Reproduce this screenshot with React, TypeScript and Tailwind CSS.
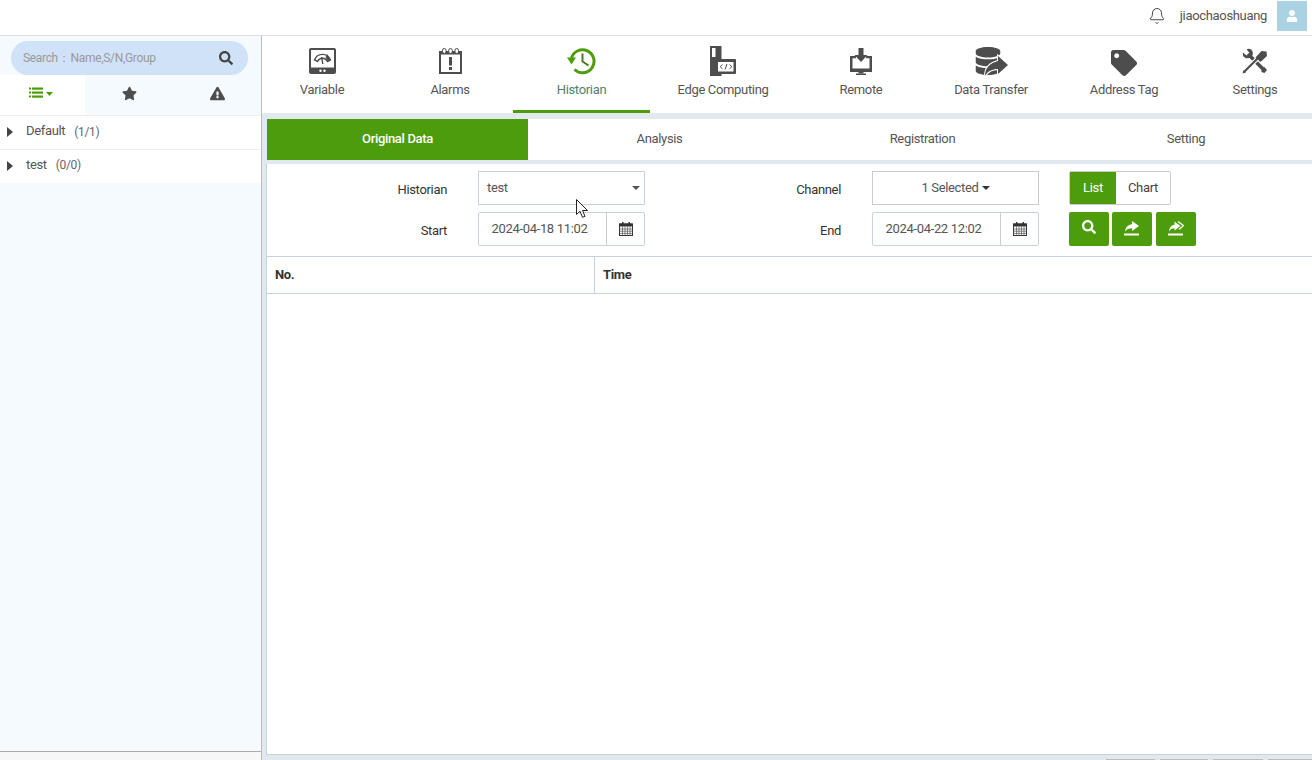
import { FaSearch, FaStar, FaExclamationTriangle, FaTag, FaUser, FaDatabase } from "react-icons/fa";
import { Bell } from "lucide-react";

const font = "font-['Roboto','Liberation_Sans',sans-serif] tracking-[-0.33px]";

const VariableIcon = () => (
  <svg width="27" height="26" viewBox="0 0 27 26">
    <rect x="0" y="0" width="27" height="26" rx="2" fill="#4d4d4d" />
    <rect x="2" y="2" width="23" height="17.500" fill="#fff" />
    <path d="M5.500 12a8.500 8.500 0 0 1 16 0l-3 1.500a5.500 5.500 0 0 0-10 0z" fill="#fff" stroke="#4d4d4d" strokeWidth="1.400" />
    <path d="M18 6l3.500 6-3 1.500a6 6 0 0 0-2-4z" fill="#4d4d4d" />
    <path d="M13.800 16l-1.200-7" stroke="#4d4d4d" strokeWidth="1.400" />
    <circle cx="11.500" cy="22.800" r="1.200" fill="#fff" />
    <circle cx="15.500" cy="22.800" r="1.200" fill="#fff" />
  </svg>
);

const AlarmIcon = () => (
  <svg width="23" height="26" viewBox="0 0 23 26">
    <rect x="1" y="4" width="21" height="21" fill="#fff" stroke="#4d4d4d" strokeWidth="2" />
    <rect x="0" y="4" width="23" height="2.500" fill="#4d4d4d" />
    <rect x="3.500" y="0.500" width="3.500" height="5" rx="1.700" fill="#fff" stroke="#4d4d4d" />
    <rect x="9.750" y="0.500" width="3.500" height="5" rx="1.700" fill="#fff" stroke="#4d4d4d" />
    <rect x="16" y="0.500" width="3.500" height="5" rx="1.700" fill="#fff" stroke="#4d4d4d" />
    <rect x="10" y="9" width="3" height="8.500" fill="#4d4d4d" />
    <rect x="10" y="19" width="3" height="3" fill="#4d4d4d" />
  </svg>
);

const HistoryIcon = () => (
  <svg width="30" height="28" viewBox="0 0 30 28">
    <path d="M4.500 11A11.500 11.500 0 1 1 7.500 22.500" fill="none" stroke="#4c9c0b" strokeWidth="3" />
    <path d="M0 10.500h9l-4.500 7z" fill="#4c9c0b" />
    <path d="M15.500 6.500v8l6 4" fill="none" stroke="#4c7a1f" strokeWidth="2" />
  </svg>
);

const EdgeIcon = () => (
  <svg width="26" height="30" viewBox="0 0 26 30">
    <rect x="0" y="0" width="11.500" height="30" fill="#4d4d4d" />
    <rect x="2" y="2" width="3.500" height="9" fill="#fff" />
    <rect x="7" y="13" width="19" height="15" rx="1" fill="#4d4d4d" />
    <rect x="8" y="16" width="15.500" height="9.500" fill="#fff" />
    <path d="M12.500 18.500l-2.300 2.200 2.300 2.200M19.500 18.500l2.300 2.200-2.300 2.200M17 18l-2 5.500" fill="none" stroke="#4d4d4d" strokeWidth="1" />
  </svg>
);

const RemoteIcon = () => (
  <svg width="22" height="27" viewBox="0 0 22 27">
    <path d="M0 8h6v2.200H2.500v10.300h17V10.200H16V8h6v16H0z" fill="#4d4d4d" />
    <path d="M8.500 0h5v7h4L11 14 4.500 7h4z" fill="#4d4d4d" />
    <rect x="8.500" y="24" width="5" height="1.500" fill="#4d4d4d" />
    <rect x="6" y="25.500" width="10" height="1.500" fill="#4d4d4d" />
  </svg>
);

const TransferIcon = () => (
  <div className="relative w-[34px] h-[29px]">
    <FaDatabase className="absolute left-0 top-0 text-[#4d4d4d]" size={28} />
    <svg className="absolute left-0 top-0" width="34" height="29" viewBox="0 0 34 29">
      <path d="M24 9l10 9-10 9v-5c-6 0-10 2-13 7 0-8 5-13 13-15z" fill="#4d4d4d" stroke="#fff" strokeWidth="2" paintOrder="stroke" />
    </svg>
  </div>
);

const SettingsIcon = () => (
  <svg width="26" height="26" viewBox="0 0 26 26">
    <path d="M6 6l15 15" stroke="#4d4d4d" strokeWidth="3.500" />
    <path d="M19.500 21.500l3-2.500 2.500 3-2.500 3-3-1z" fill="#4d4d4d" />
    <path d="M1 4.500L4.500 7.500 7.500 5 4.500 1.200C7.500-0.300 10.500 1.500 10.800 4.500 11 6.500 10.300 8 9 9.200 6.500 11 3 10.500 1.500 8.500 .8 7.300 .7 6 1 4.500z" fill="#4d4d4d" />
    <path d="M3 23L16 10" stroke="#fff" strokeWidth="4.500" />
    <path d="M2.500 23.500L15.500 10.500" stroke="#4d4d4d" strokeWidth="2.200" />
    <path d="M13.500 9.500l6-6.500 5 0.500 .5 4.500-6.500 6z" fill="#4d4d4d" />
    <path d="M0.500 25.500l1-3.500 2.500 2.500z" fill="#4d4d4d" />
  </svg>
);

const ShareLine = ({ double }: { double?: boolean }) => (
  <svg width="16" height="15" viewBox="0 0 16 15" fill="#fff">
    {double && <path d="M10 0.500l5.500 4.200-4.500 3.800" fill="none" stroke="#fff" strokeWidth="1.200" />}
    <path d={double ? "M6.500 .5l6 4.500-6 4.500V7.300C4 7.300 2.200 8.200 1 10.500 1.300 7 3 4.300 6.500 3.800z" : "M8 0l7 5-7 5V7.300C5 7.300 2.500 8.200 1 10.500 1.300 6.500 4 3.800 8 3.300z"} />
    <rect x="0" y="12.500" width="15" height="2" />
  </svg>
);

const CalendarIcon = () => (
  <svg width="14" height="14" viewBox="0 0 14 14">
    <rect x="0.500" y="2" width="13" height="11.500" fill="#fff" stroke="#333" />
    <rect x="0.500" y="1.500" width="13" height="3" fill="#333" />
    <rect x="3" y="0" width="1.500" height="3" fill="#333" />
    <rect x="9.500" y="0" width="1.500" height="3" fill="#333" />
    <path d="M0.500 7h13M0.500 9.200h13M0.500 11.400h13M3.500 4.500v9M6 4.500v9M8.500 4.500v9M11 4.500v9" stroke="#555" strokeWidth="0.700" />
  </svg>
);

const navItems = [
  { label: "Variable", icon: <VariableIcon />, cls: "w-[125px] pr-[5px]" },
  { label: "Alarms", icon: <AlarmIcon />, cls: "w-[126px]" },
  { label: "Historian", icon: <HistoryIcon />, cls: "w-[137px]", active: true },
  { label: "Edge Computing", icon: <EdgeIcon />, cls: "w-[146px]" },
  { label: "Remote", icon: <RemoteIcon />, cls: "w-[130px]" },
  { label: "Data Transfer", icon: <TransferIcon />, cls: "w-[130px]" },
  { label: "Address Tag", icon: <FaTag size={26} className="text-[#4d4d4d] mt-[3px]" />, cls: "w-[136px]" },
  { label: "Settings", icon: <SettingsIcon />, cls: "w-[120px] pl-[6px]" },
];

const CalendarBtn = () => (
  <div className="w-[38px] h-full flex items-center justify-center border-l border-[#ccc]">
    <CalendarIcon />
  </div>
);

export default function App() {
  return (
    <div className={`${font} w-[1312px] h-[760px] overflow-hidden flex flex-col bg-white text-[#555] text-[13px]`}>
      {/* Top bar */}
      <header className="h-9 shrink-0 bg-white border-b border-[#ddd] flex items-start justify-end pr-[5px]">
        <Bell size={18} strokeWidth={1.2} className="mt-[7px] text-[#333]" />
        <span className="ml-[14px] mt-[7px] text-[#555] leading-[17px]">jiaochaoshuang</span>
        <div className="ml-[10px] mt-px w-[30px] h-[30px] bg-[#a9d2e3] flex items-center justify-center">
          <FaUser size={12} className="text-white" />
        </div>
      </header>

      <div className="flex flex-1 min-h-0">
        {/* Sidebar */}
        <aside className="w-[262px] shrink-0 border-r border-[#bbb] bg-[#f5faff] flex flex-col">
          <div className="h-[39px] shrink-0 pt-[5px] pl-[11px] pr-[13px]">
            <div className="h-[34px] rounded-full bg-[#d0e2f8] flex items-center pl-[12px] pr-[15px] text-[12px] text-[#999]">
              <span>Search：</span>
              <span className="ml-px">Name,S/N,Group</span>
              <FaSearch size={14} className="ml-auto text-[#444]" />
            </div>
          </div>
          <div className="h-[41px] shrink-0 flex border-b border-[#eee] pb-[4px] bg-[linear-gradient(90deg,#fff_85px,transparent_85px)]">
            <div className="w-[85px] flex items-center justify-center pr-[4px]">
              <svg width="24" height="12" viewBox="0 0 24 12" fill="#4c9c0b">
                <rect x="0" y="0.500" width="2" height="2" /><rect x="3" y="0.500" width="11" height="2.200" />
                <rect x="0" y="4.500" width="2" height="2" /><rect x="3" y="4.500" width="11" height="2.200" />
                <rect x="0" y="8.500" width="2" height="2" /><rect x="3" y="8.500" width="11" height="2.200" />
                <path d="M17 5h7l-3.500 4z" />
              </svg>
            </div>
            <div className="w-[88px] flex items-center justify-center">
              <FaStar size={15} className="text-[#4d4d4d]" />
            </div>
            <div className="flex-1 flex items-center justify-center">
              <FaExclamationTriangle size={15} className="text-[#4d4d4d]" />
            </div>
          </div>
          <div className="h-[34px] shrink-0 bg-white border-b border-[#eee] flex items-center">
            <span className="ml-[7px] -mt-[2px] w-0 h-0 border-y-[5px] border-y-transparent border-l-[6px] border-l-[#444]" />
            <span className="ml-[13px] -mt-[4px] text-[#555]">Default</span>
            <span className="ml-[9px] -mt-[2px] text-[#666] text-[12px]">(1/1)</span>
          </div>
          <div className="h-[33px] shrink-0 bg-white flex items-center">
            <span className="ml-[7px] -mt-[2px] w-0 h-0 border-y-[5px] border-y-transparent border-l-[6px] border-l-[#444]" />
            <span className="ml-[13px] -mt-[4px] text-[#555]">test</span>
            <span className="ml-[9px] -mt-[3px] text-[#666] text-[12px]">(0/0)</span>
          </div>
          <div className="flex-1" />
          <div className="h-[9px] shrink-0 bg-[#f7f7f7] border-t border-[#aaa]" />
        </aside>

        {/* Main */}
        <main className="flex-1 min-w-0 bg-[#e1e8ee] flex flex-col">
          <nav className="h-[77px] shrink-0 bg-white flex">
            {navItems.map((item) => (
              <div
                key={item.label}
                className={`${item.cls} shrink-0 h-full flex flex-col items-center pt-[9px] border-b-[3px] ${item.active ? "border-[#4c9c0b] text-[#4f7f6f]" : "border-transparent text-[#555]"}`}
              >
                <div className="h-[32px] flex items-center justify-center">{item.icon}</div>
                <span className="mt-[4px] leading-[17px]">{item.label}</span>
              </div>
            ))}
          </nav>

          <div className="mt-[6px] ml-[5px] h-[41px] shrink-0 flex bg-white">
            <div className="w-[261px] bg-[#4c9c0b] text-white font-medium flex items-center justify-center pb-[2px]">Original Data</div>
            <div className="w-[263px] flex items-center justify-center pb-[2px]">Analysis</div>
            <div className="w-[263px] flex items-center justify-center pb-[2px]">Registration</div>
            <div className="flex-1 flex items-center justify-center pb-[2px] pl-[6px]">Setting</div>
          </div>

          <section className="mt-1 ml-[4px] flex-1 min-h-0 bg-white border-l border-b border-[#c3d3e3] flex flex-col">
            {/* Filter form */}
            <div className="h-[92px] shrink-0 pt-[7px] flex">
              <div className="w-[180px] flex flex-col items-end text-[#333]">
                <span className="h-[33px] leading-[38px]">Historian</span>
                <span className="mt-[8px] h-[33px] leading-[38px]">Start</span>
              </div>
              <div className="ml-[31px] w-[167px] flex flex-col gap-[7px]">
                <div className="h-[34px] border border-[#c3d3e3] flex items-center pl-[8px] pr-[4px]">
                  <span>test</span>
                  <span className="ml-auto w-0 h-0 border-x-4 border-x-transparent border-t-4 border-t-[#555]" />
                </div>
                <div className="h-[34px] flex border border-[#c3d3e3] rounded-[2px]">
                  <div className="flex-1 flex items-center justify-center pb-[1px] pr-[6px]">2024-04-18 11:02</div>
                  <CalendarBtn />
                </div>
              </div>
              <div className="w-[196px] flex flex-col items-end text-[#333]">
                <span className="h-[33px] leading-[38px]">Channel</span>
                <span className="mt-[8px] h-[33px] leading-[38px]">End</span>
              </div>
              <div className="ml-[31px] w-[167px] flex flex-col gap-[7px]">
                <div className="h-[34px] border border-[#ccc] flex items-center justify-center gap-[3px]">
                  <span>1 Selected</span>
                  <span className="w-0 h-0 border-x-4 border-x-transparent border-t-4 border-t-[#333]" />
                </div>
                <div className="h-[34px] flex border border-[#c3d3e3] rounded-[2px]">
                  <div className="flex-1 flex items-center justify-center pb-[1px] pr-[6px]">2024-04-22 12:02</div>
                  <CalendarBtn />
                </div>
              </div>
              <div className="ml-[30px] flex flex-col gap-[7px]">
                <div className="h-[34px] w-[102px] flex border border-[#ccc] rounded-[2px]">
                  <div className="w-[46px] bg-[#4c9c0b] text-white flex items-center justify-center">List</div>
                  <div className="flex-1 flex items-center justify-center text-[#444]">Chart</div>
                </div>
                <div className="flex gap-[3px]">
                  <div className="w-[40px] h-[34px] rounded-[2px] bg-[#4c9c0b] flex items-center justify-center pb-[4px]">
                    <FaSearch size={14} className="text-white" />
                  </div>
                  <div className="w-[40px] h-[34px] rounded-[2px] bg-[#4c9c0b] flex items-center justify-center pb-[2px]">
                    <ShareLine />
                  </div>
                  <div className="ml-px w-[40px] h-[34px] rounded-[2px] bg-[#4c9c0b] flex items-center justify-center pb-[2px]">
                    <ShareLine double />
                  </div>
                </div>
              </div>
            </div>

            {/* Table header */}
            <div className="h-[38px] shrink-0 flex border-y border-[#c3d3e3] text-[#333] font-bold">
              <div className="w-[328px] flex items-center pl-[8px] border-r border-[#c3d3e3]">No.</div>
              <div className="flex-1 flex items-center pl-[8px]">Time</div>
            </div>
            <div className="flex-1" />
          </section>

          {/* Tops of the pager buttons, cut off by the window */}
          <div className="h-[5px] shrink-0 flex items-end">
            <div className="ml-[844px] w-[49px] h-px bg-[#bbb]" />
            <div className="ml-[5px] w-[48px] h-px bg-[#bbb]" />
            <div className="ml-[5px] w-[50px] h-px bg-[#bbb]" />
            <div className="ml-[5px] w-[44px] h-px bg-[#bbb]" />
          </div>
        </main>
      </div>

      {/* Mouse cursor caught in the screenshot */}
      <svg className="absolute left-[576px] top-[199px]" width="13" height="20" viewBox="0 0 13 20">
        <path d="M0.500 0.500v15l3.500-3.200 2.500 6 2.500-1-2.500-5.800h5z" fill="#fff" stroke="#222" strokeWidth="1" />
      </svg>
    </div>
  );
}
